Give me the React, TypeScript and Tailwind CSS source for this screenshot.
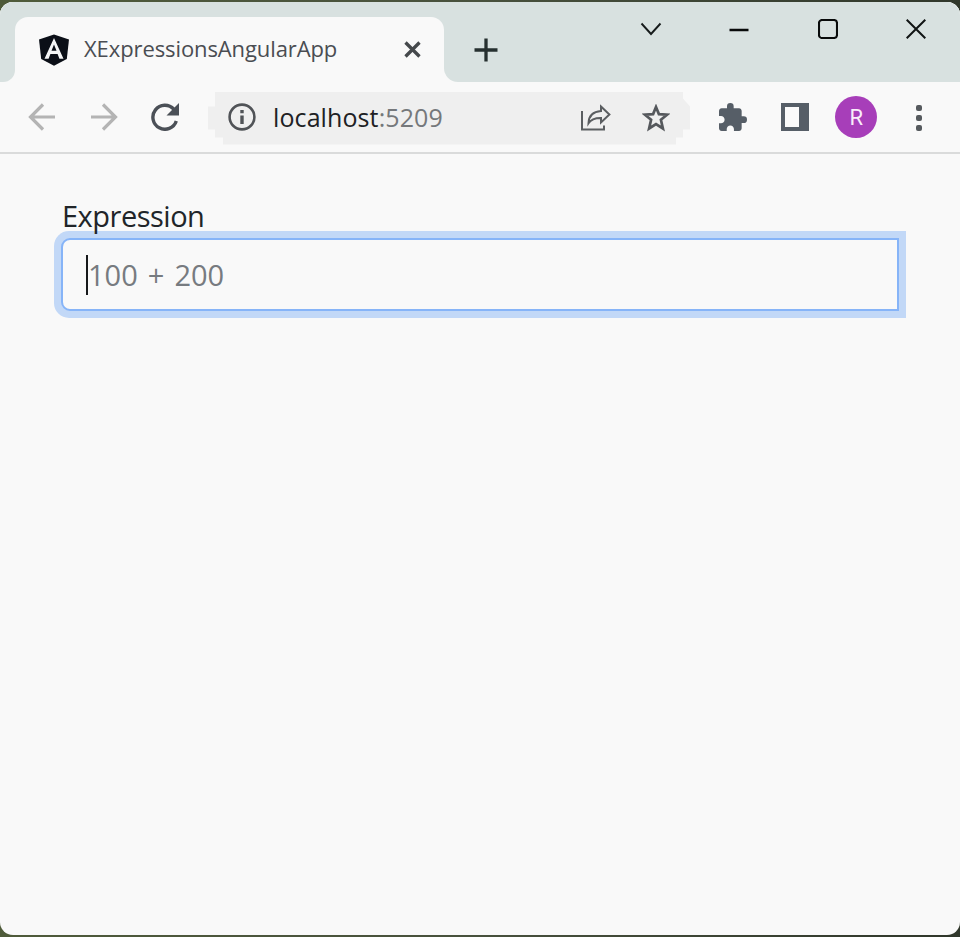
import React from "react";

const font = "font-['Open_Sans','Noto_Sans',sans-serif]";

function Cell({ children }: { children: React.ReactNode }) {
  return <div className="flex h-[70px] w-[61.5px] shrink-0 items-center justify-center">{children}</div>;
}

function AngularLogo() {
  return (
    <svg width="32" height="32" viewBox="0 0 32 32" className="shrink-0">
      <path d="M16 0.5 L31 5.5 L28.8 25 L16 31.7 L3.2 25 L1 5.5 Z" fill="#0b0f17" />
      <path fillRule="evenodd" d="M16 4 L25.5 24.7 H21.4 L19.6 20 H12.4 L10.6 24.7 H6.5 Z M16 10.5 L13.5 16.8 H18.5 Z" fill="#f4f5f6" />
    </svg>
  );
}

function TabStrip() {
  return (
    <header className="flex h-[80px] shrink-0 bg-[#d8e1e0]">
      <div className="flex w-[15px] items-end bg-[#f9f9f9]">
        <div className="h-[80px] w-[15px] rounded-br-[12px] bg-[#d8e1e0]" />
      </div>
      <div className="flex w-[429px] flex-col bg-[#d8e1e0] pt-[15px]">
        <div className="flex h-[65px] items-center rounded-t-[13px] bg-[#f9f9f9] pl-[23px] pr-[23px]">
          <AngularLogo />
          <span className={`mb-[3px] ml-[14px] flex-1 whitespace-nowrap text-[22px] leading-[30px] tracking-[-0.1px] text-[#4a4d52] ${font}`}>
            XExpressionsAngularApp
          </span>
          <svg width="17" height="17" viewBox="0 0 17 17" fill="none" stroke="#45494c" strokeWidth="3.3">
            <path d="M1.5 1.5 15.5 15.5M15.5 1.5 1.5 15.5" />
          </svg>
        </div>
      </div>
      <div className="flex flex-1 bg-[#f9f9f9]">
        <div className="flex flex-1 items-start rounded-bl-[14px] bg-[#d8e1e0]">
          <svg width="24" height="24" viewBox="0 0 24 24" className="ml-[29.5px] mt-[36px]" stroke="#263030" strokeWidth="3.3">
            <path d="M12 .5v23M.5 12h23" />
          </svg>
          <svg width="22" height="14" viewBox="0 0 22 14" className="ml-[142px] mt-[20px]" fill="none" stroke="#171c1c" strokeWidth="1.9">
            <path d="M1.500 1.500 11 12 20.500 1.500" />
          </svg>
          <svg width="20" height="4" viewBox="0 0 20 4" className="ml-[67px] mt-[25.5px]">
            <path d="M.5 2h19" stroke="#080a0a" strokeWidth="2.400" />
          </svg>
          <svg width="20" height="20" viewBox="0 0 20 20" className="ml-[69px] mt-[17px]" fill="none">
            <rect x="1" y="1" width="18" height="18" rx="3" stroke="#080a0a" strokeWidth="2.100" />
          </svg>
          <svg width="20" height="20" viewBox="0 0 20 20" className="ml-[68px] mt-[17px]" fill="none">
            <path d="M.7.7 19.3 19.3M19.3.7.7 19.3" stroke="#101414" strokeWidth="2" />
          </svg>
        </div>
      </div>
    </header>
  );
}

function AddressBar() {
  return (
    <div className="ml-[12.25px] mr-[12.5px] flex h-[53px] w-[482px] shrink-0 items-center bg-[#efefef] pl-[20px] pr-[20px] [clip-path:polygon(7px_0,475px_0,475px_7px,482px_15px,482px_38px,475px_38px,475px_46px,468px_46px,468px_53px,15px_53px,15px_46px,7px_46px,7px_38px,0_38px,0_15px,7px_15px)]">
      <svg width="28" height="28" viewBox="0 0 28 28" fill="none" className="mb-[2px]">
        <circle cx="14" cy="14" r="12.4" stroke="#505357" strokeWidth="2.6" />
        <path d="M14 7v3.2M14 12.4v8.6" stroke="#505357" strokeWidth="3.4" />
      </svg>
      <span className={`mb-[2px] ml-[17px] flex-1 whitespace-nowrap text-[25px] leading-[34px] tracking-[0.1px] text-[#202124] ${font}`}>
        localhost<span className="text-[#75787b]">:5209</span>
      </span>
      <svg width="30" height="28" viewBox="0 0 30 28" fill="none" stroke="#5b5e61" strokeWidth="2">
        <path d="M1 7v18.500h22v-4" />
        <path d="M20 2.500 28.400 10.500 20 18.500v-4.500c-6-.1-10 1.300-12.500 5.200.3-7 4-11.500 12.500-12.100Z" strokeLinejoin="miter" />
      </svg>
      <svg width="28" height="28" viewBox="0 0 28 28" fill="none" className="ml-[31px]">
        <path d="M14 3 16.900 10.100 25 10.700 18.900 15.800 20.900 24.500 14 20 7.100 24.500 9.100 15.800 3 10.700 11.100 10.100Z" stroke="#55585c" strokeWidth="2.7" />
      </svg>
    </div>
  );
}

function Toolbar() {
  return (
    <div className="flex h-[72px] shrink-0 items-start border-b-2 border-[#dadbdb] bg-[#f9f9f9] pl-[11.25px]">
      <Cell>
        <svg width="28" height="28" viewBox="0 0 28 28" fill="none" stroke="#b4b4b4" strokeWidth="3.2">
          <path d="M27 14H3M15 1.500 2.500 14 15 26.500" />
        </svg>
      </Cell>
      <Cell>
        <svg width="28" height="28" viewBox="0 0 28 28" fill="none" stroke="#b4b4b4" strokeWidth="3.2">
          <path d="M1 14H25M13 1.500 25.500 14 13 26.500" />
        </svg>
      </Cell>
      <Cell>
        <svg width="28" height="28" viewBox="0 0 28 28" fill="none">
          <path d="M22.800 6.200A12 12 0 1 0 25.300 18" stroke="#4b5057" strokeWidth="3.4" />
          <path d="M28 0v12.500H15.500Z" fill="#4b5057" />
        </svg>
      </Cell>
      <div className="flex h-[72px] items-center">
        <AddressBar />
      </div>
      <Cell>
        <svg width="28" height="28" viewBox="2 1 21 21" fill="#565e67">
          <path d="M20.500 11H19V7c0-1.100-.9-2-2-2h-4V3.500a2.500 2.500 0 0 0-5 0V5H4c-1.100 0-1.990.9-1.990 2v3.800H3.500c1.490 0 2.700 1.210 2.700 2.700s-1.210 2.700-2.700 2.700H2V20c0 1.100.9 2 2 2h3.800v-1.500c0-1.490 1.210-2.700 2.700-2.700s2.700 1.210 2.700 2.700V22H17c1.100 0 2-.9 2-2v-4h1.500a2.500 2.500 0 0 0 0-5z" />
        </svg>
      </Cell>
      <Cell>
        <div className="flex h-[28px] w-[28px] bg-[#565e67] py-[4px] pl-[4px]">
          <div className="h-[20px] w-[14px] bg-[#fafafa]" />
        </div>
      </Cell>
      <Cell>
        <div className="flex h-[42px] w-[42px] items-center justify-center rounded-full bg-[#a73eb9] pt-[2px] font-['Roboto',sans-serif] text-[22px] leading-none text-[#f9edfa]">
          R
        </div>
      </Cell>
      <Cell>
        <div className="ml-[2px] flex flex-col gap-[4.500px] pt-[2px]">
          <div className="h-[5.500px] w-[5.500px] rounded-[2px] bg-[#565a5e]" />
          <div className="h-[5.500px] w-[5.500px] rounded-[2px] bg-[#565a5e]" />
          <div className="h-[5.500px] w-[5.500px] rounded-[2px] bg-[#565a5e]" />
        </div>
      </Cell>
    </div>
  );
}

export default function App() {
  return (
    <div className="h-[937px] w-[960px] overflow-hidden bg-linear-to-r from-[#4f5b3a] via-[#48513d] to-[#30372b] py-[2px]">
      <div className="flex h-[933px] flex-col overflow-hidden rounded-[13px] bg-[#f9f9f9]">
        <TabStrip />
        <Toolbar />
        <main className={`flex flex-col pl-[54px] pt-[42px] ${font}`}>
          <label className="relative z-10 ml-[8px] h-[35px] text-[29px] leading-[40px] tracking-[-0.5px] text-[#212529]">Expression</label>
          <div className="h-[87px] w-[852px] rounded-l-[15px] bg-[#c2d8f7] p-[7px]">
            <div className="flex h-[73px] items-center rounded-l-[9px] border-2 border-[#86b4f8] bg-[#f9f9f9] pl-[23px]">
              <div className="h-[40px] w-[2px] bg-[#17191b]" />
              <span className="mt-px whitespace-nowrap text-[29px] leading-[40px] [word-spacing:2.5px] text-[#777b80]">100 + 200</span>
            </div>
          </div>
        </main>
      </div>
    </div>
  );
}
